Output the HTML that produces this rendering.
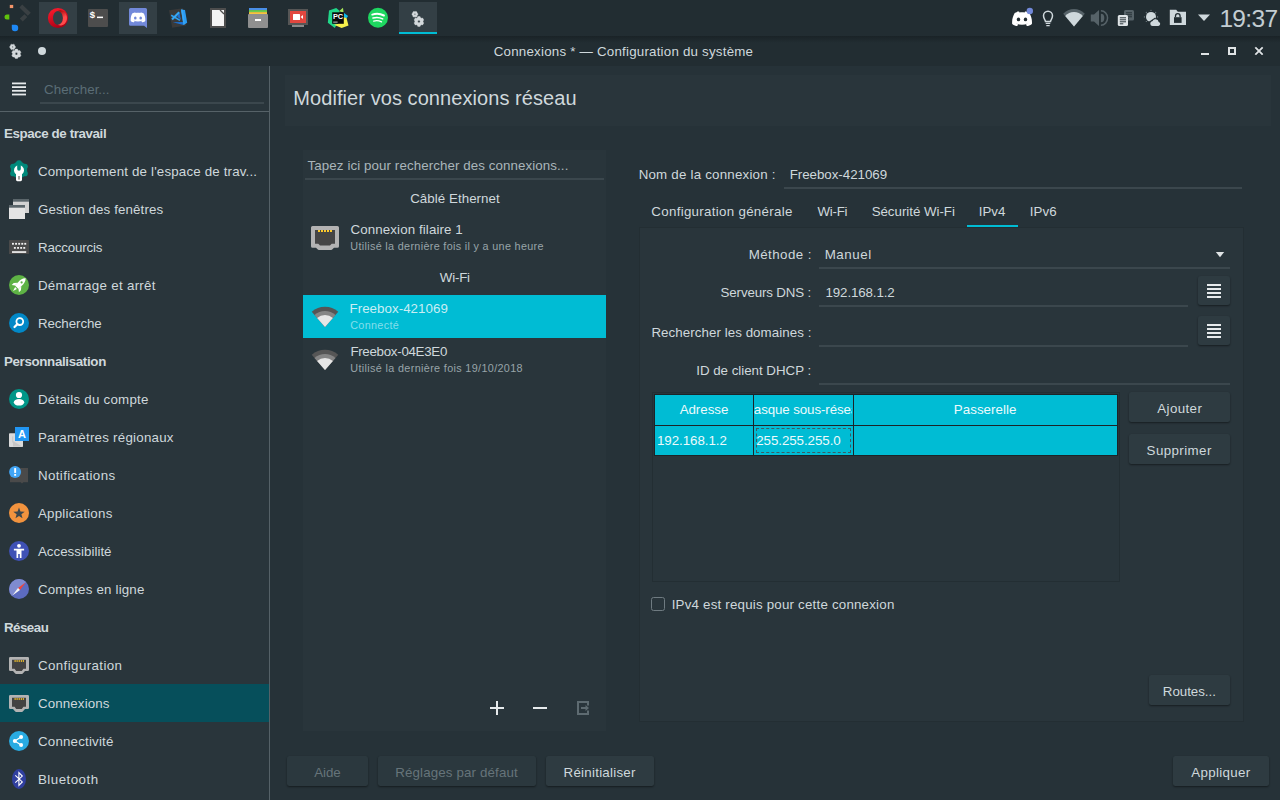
<!DOCTYPE html>
<html lang="fr">
<head>
<meta charset="utf-8">
<title>Connexions — Configuration du système</title>
<style>
*{box-sizing:border-box;margin:0;padding:0}
html,body{width:1280px;height:800px;overflow:hidden;background:#263238}
body{position:relative;font-family:"Liberation Sans",sans-serif;font-size:13.33px;color:#cfd8dc;letter-spacing:.17px}
.abs{position:absolute}
.t{position:absolute;white-space:nowrap;line-height:18px;height:18px;margin-top:0}
#panel{position:absolute;left:0;top:0;width:1280px;height:36px;background:#222d32}
#tbar{position:absolute;left:0;top:36px;width:1280px;height:30px;background:#222d32}
#tshadow{position:absolute;left:0;top:36px;width:1280px;height:7px;background:linear-gradient(#1a2327,rgba(34,45,50,0))}
.slot{position:absolute;top:2px;width:38px;height:32px;background:#333f45}
#side{position:absolute;left:0;top:66px;width:269px;height:734px;background:#29353b}
#sidesep{position:absolute;left:269px;top:66px;width:1px;height:734px;background:#556167}
.cat{position:absolute;left:4px;font-weight:bold;font-size:13.33px;white-space:nowrap;line-height:18px;letter-spacing:-.42px;margin-top:0}
.it{position:absolute;left:38px;white-space:nowrap;line-height:18px;margin-top:0}
.ic{position:absolute;left:8px;width:22px;height:22px}
.btn{position:absolute;background:#2e3b41;border-radius:2.5px;box-shadow:0 1px 2px rgba(0,0,0,.45);height:30.4px}
.btn.dis{background:#2b383e}
.ul{position:absolute;height:2px;background:#3b474d}

</style>
</head>
<body>

<svg width="0" height="0" style="position:absolute">
<defs>
<g id="gears" fill="#d3d8db" stroke="#d3d8db" stroke-width=".5" stroke-linejoin="round"><path fill-rule="evenodd" d="M14.91 20.51L14.35 21.85L11.65 21.85L11.09 20.51L10.05 19.91L8.61 20.09L7.26 17.75L8.14 16.60L8.14 15.40L7.26 14.25L8.61 11.91L10.05 12.09L11.09 11.49L11.65 10.15L14.35 10.15L14.91 11.49L15.95 12.09L17.39 11.91L18.74 14.25L17.86 15.40L17.86 16.60L18.74 17.75L17.39 20.09L15.95 19.91zM14.50 16a1.5 1.5 0 1 0 -3.00 0a1.5 1.5 0 1 0 3.00 0z"/><path fill-rule="evenodd" d="M10.96 6.16L11.73 6.56L11.73 8.30L10.96 8.70L10.70 9.15L10.74 10.02L9.23 10.89L8.50 10.42L7.98 10.42L7.25 10.89L5.74 10.02L5.78 9.15L5.52 8.70L4.75 8.30L4.75 6.56L5.52 6.16L5.78 5.71L5.74 4.84L7.25 3.97L7.98 4.44L8.50 4.44L9.23 3.97L10.74 4.84L10.70 5.71zM9.04 7.43a0.8 0.8 0 1 0 -1.60 0a0.8 0.8 0 1 0 1.60 0z"/></g>
</defs>
</svg>
<!-- top panel -->
<div id="panel"></div>
<div id="tbar"></div>
<div id="tshadow"></div>
<div class="slot" style="left:39px"></div>
<div class="slot" style="left:119px"></div>
<div class="slot" style="left:399px"></div>
<div class="abs" style="left:399px;top:32px;width:38px;height:2px;background:#00bcd4"></div>

<!-- launcher -->
<svg class="abs" style="left:0;top:0" width="36" height="36" viewBox="0 0 36 36">
<rect x="9.8" y="4.9" width="3.4" height="3.2" fill="#f4956a"/>
<path d="M7 14.5h2.3v5H7a2.5 2.5 0 0 1 0-5z" fill="#5fc20d"/>
<path d="M11.8 24.8h3.4a3 3 0 0 1 3 3v.4a3 3 0 0 1-3 3h-.4a3 3 0 0 1-3-3z" fill="#1e88f5"/>
<path d="M22.2 4.6l8.6 8.1-3 3.1-8.4-8.2zM24.5 14.3l2.8 2.8-4.6 4.4-2.9-2.9z" fill="#3a4043"/>
</svg>
<!-- opera -->
<svg class="abs" style="left:46px;top:6px" width="24" height="24" viewBox="0 0 24 24">
<defs><linearGradient id="og" x1="0.2" y1="0" x2="0.6" y2="1"><stop offset="0" stop-color="#ff1b2d"/><stop offset="1" stop-color="#a70014"/></linearGradient>
<linearGradient id="og2" x1="0" y1="0" x2="0.3" y2="1"><stop offset="0" stop-color="#9c0000"/><stop offset="0.6" stop-color="#ff4b4b"/></linearGradient></defs>
<path fill-rule="evenodd" fill="url(#og)" d="M12 1.900a10.100 10.100 0 1 0 0 20.200 10.100 10.100 0 1 0 0-20.200zM12 5c2.750 0 4.950 3.100 4.950 6.900s-2.200 6.900-4.950 6.900-4.950-3.100-4.950-6.900 2.200-6.900 4.950-6.900z"/>
<path fill="url(#og2)" d="M12 5C14.600 2.900 21 5.500 21 12s-6.400 9-9 6.800A4.950 6.900 0 0 0 12 5z"/>
</svg>
<!-- terminal -->
<svg class="abs" style="left:86px;top:6px" width="24" height="24" viewBox="0 0 24 24">
<rect x="2" y="3" width="20" height="18" rx="1" fill="#4d4d4d"/>
<text x="3.600" y="12" font-family="Liberation Mono,monospace" font-weight="bold" font-size="9.500" fill="#fff">$</text>
<rect x="11" y="10.600" width="6" height="1.500" fill="#fff"/>
</svg>
<!-- discord -->
<svg class="abs" style="left:126px;top:6px" width="24" height="24" viewBox="0 0 24 24">
<path d="M4.500 2h15a1.500 1.500 0 0 1 1.500 1.500V22l-3-2.200H4.500A1.500 1.500 0 0 1 3 18.300V3.500A1.500 1.500 0 0 1 4.500 2z" fill="#7289da"/>
<path transform="translate(0 -.8)" d="M6.200 8.400c1.300-.9 2.600-1.100 3.200-1.100l.3.500c1.500-.2 3.100-.2 4.600 0l.3-.5c.6 0 1.900.2 3.200 1.100 1 2 1.800 4.300 1.500 7.300-1.200 1-2.400 1.300-3.300 1.300l-.7-1c.5-.2.900-.4 1.300-.7-2.700 1.300-6.500 1.300-9.200 0 .4.300.8.500 1.300.7l-.7 1c-.9 0-2.100-.3-3.300-1.300-.3-3 .5-5.300 1.500-7.300z" fill="#fff"/>
<ellipse cx="9.300" cy="11.900" rx="1.300" ry="1.500" fill="#7289da"/><ellipse cx="14.700" cy="11.900" rx="1.300" ry="1.500" fill="#7289da"/>
</svg>
<!-- vscode -->
<svg class="abs" style="left:166px;top:6px" width="24" height="24" viewBox="0 0 24 24">
<path d="M3 4.200L17 2.200l3.200 17.400-14 2.200z" fill="#3a3a3a"/>
<path d="M13.200 6.200l1.800 7.600-3.800-3z" fill="#1e6fd0"/>
<path d="M5.200 9.200l8.800 5.200" stroke="#2fa3f4" stroke-width="1.600"/>
<path d="M6 13.600l7.200-7.400" stroke="#35a7f5" stroke-width="2.100"/>
<path d="M6.800 16.300L17 16l.6 3z" fill="#1a73d8"/>
<path d="M15 3.400l4 .6 2.200 12.800-3.600 2.200-.6-3z" fill="#2a9bf3"/>
<path d="M15 3.400l1.800.3 2 14.200-1.200 1.100-.6-3z" fill="#3aa8f6"/>
</svg>
<!-- document -->
<svg class="abs" style="left:206px;top:6px" width="24" height="24" viewBox="0 0 24 24">
<path d="M4 2h16v20H4z" fill="#4d4d4d"/>
<path d="M6 4h8.500L18 7.500V20H6z" fill="#f4f4f4"/>
<path d="M14.500 4L18 7.500V4z" fill="#f4f4f4" opacity=".0"/>
<path d="M14 4h4v4z" fill="#f4f4f4"/>
<path d="M14 4l4 4" stroke="#4d4d4d" stroke-width="1.300"/>
</svg>
<!-- archive -->
<svg class="abs" style="left:246px;top:6px" width="24" height="24" viewBox="0 0 24 24">
<rect x="3" y="2" width="18" height="2.200" fill="#4a8fe7"/>
<rect x="3" y="4.100" width="18" height="2.100" fill="#6ccb4f"/>
<rect x="3" y="6.100" width="18" height="2.200" fill="#f7c540"/>
<rect x="2" y="8" width="20" height="14" rx="1" fill="#8f8f8f"/>
<rect x="9" y="13" width="6" height="2" fill="#fff"/>
</svg>
<!-- recorder -->
<svg class="abs" style="left:286px;top:6px" width="24" height="24" viewBox="0 0 24 24">
<rect x="2" y="3" width="20" height="16" fill="#565656"/>
<rect x="4" y="5" width="16" height="12" fill="#e2473f"/>
<rect x="6" y="19" width="12" height="2" fill="#8a8a8a"/>
<rect x="7" y="8" width="7" height="6" rx=".5" fill="#fff"/>
<path d="M14.600 11l2.400-2v4z" fill="#fff"/>
</svg>
<!-- pycharm -->
<svg class="abs" style="left:326px;top:6px" width="24" height="24" viewBox="0 0 24 24">
<path d="M3 4.600l7.200-2.600 3 2.600 1 8L8.800 22 1.800 16.800z" fill="#21d789"/>
<path d="M13 5.200l4-3.400.6 4.800z" fill="#a6e55a"/>
<path d="M17.800 6.800l4.300 3.200-1.600 2.200-2.700-.8z" fill="#0fb9ea"/>
<path d="M17.800 11.200l2.700.9 2 7.500-6.900 2.400-7.600-3.200 4-1z" fill="#f7f04b"/>
<rect x="6.200" y="6.300" width="11.600" height="11.500" fill="#0a0a0a"/>
<text x="7" y="12.600" font-family="Liberation Sans,sans-serif" font-weight="bold" font-size="7.400" fill="#fff" letter-spacing="-.3">PC</text>
<rect x="7.200" y="15.600" width="4.400" height="1" fill="#c8c8c8"/>
</svg>
<!-- spotify -->
<svg class="abs" style="left:366px;top:6px" width="24" height="24" viewBox="0 0 24 24">
<circle cx="12" cy="11.800" r="10" fill="#1ed760"/>
<path d="M6.300 8.600c4-1.200 8.200-.8 11.600.9" stroke="#fff" stroke-width="2" fill="none" stroke-linecap="round"/>
<path d="M7 12c3.300-.9 6.800-.6 9.700.9" stroke="#fff" stroke-width="1.600" fill="none" stroke-linecap="round"/>
<path d="M7.700 15.100c2.700-.7 5.400-.4 7.800.8" stroke="#fff" stroke-width="1.300" fill="none" stroke-linecap="round"/>
</svg>
<!-- settings (task) -->
<svg class="abs" style="left:408.1px;top:7.5px" width="20.2" height="20.2" viewBox="0 0 24 24"><use href="#gears"/></svg>

<!-- tray: discord -->
<svg class="abs" style="left:1010px;top:6px" width="24" height="24" viewBox="0 0 24 24">
<path d="M4.700 6.900c1.700-1.100 3.500-1.300 4.400-1.300l.4.800c1.700-.3 3.400-.3 5.100 0l.4-.8c.9 0 2.700.2 4.400 1.300 1.600 2.900 3 6.600 2.500 11.100-1.800 1.500-3.600 2-5 2.100l-1-1.600c.7-.2 1.300-.6 1.900-1-3.700 1.700-7.800 1.700-11.500 0 .6.400 1.200.8 1.900 1l-1 1.600c-1.400-.1-3.200-.6-5-2.100-.5-4.500.9-8.200 2.500-11.100z" fill="#fff"/>
<ellipse cx="8.500" cy="13.400" rx="1.700" ry="1.900" fill="#222d32"/><ellipse cx="15.500" cy="13.400" rx="1.700" ry="1.900" fill="#222d32"/>
<circle cx="19.800" cy="5" r="3.200" fill="#7289da"/>
</svg>
<!-- tray: bulb -->
<svg class="abs" style="left:1036px;top:6px" width="24" height="24" viewBox="0 0 24 24" fill="none" stroke="#cfd8dc">
<path d="M9.500 15.600c0-1.700-2-2.800-2-5.800a4.500 4.500 0 0 1 9 0c0 3-2 4.100-2 5.800z" stroke-width="1.500"/>
<path d="M9.700 17.400h4.600M10.300 19.600h3.400" stroke-width="1.200"/>
</svg>
<!-- tray: wifi -->
<svg class="abs" style="left:1062px;top:6px" width="24" height="24" viewBox="0 0 24 24">
<path d="M12 20.400L1.200 7.800A14.500 14.500 0 0 1 22.800 7.800z" fill="#566268"/>
<path d="M12 20.400L3.200 10A11.800 11.800 0 0 1 20.800 10z" fill="#cfd8dc"/>
</svg>
<!-- tray: volume -->
<svg class="abs" style="left:1087px;top:6px" width="24" height="24" viewBox="0 0 24 24" fill="#566268">
<path d="M3.800 8.600h3.200l5-4.700v16.200l-5-4.700H3.800z"/>
<path d="M13.900 7.800a3.400 4.200 0 0 1 0 8.400z"/>
<path d="M13.900 3.900a7.400 8.100 0 0 1 0 16.200v-1.600a5.900 6.500 0 0 0 0-13z"/>
</svg>
<!-- tray: clipboard -->
<svg class="abs" style="left:1114px;top:6px" width="24" height="24" viewBox="0 0 24 24">
<rect x="10" y="4" width="10" height="10.600" rx="1.500" fill="#566268"/>
<path d="M12 6.800h6M12 8.800h6M12 10.800h6M12 12.800h3" stroke="#222d32" stroke-width=".9"/>
<rect x="3.800" y="9" width="10.200" height="11" rx="1.500" fill="#dfe4e7"/>
<path d="M5.800 11.800h6.200M5.800 13.800h6.200M5.800 15.800h6.200M5.800 17.800h3.500" stroke="#222d32" stroke-width=".95"/>
</svg>
<!-- tray: weather -->
<svg class="abs" style="left:1140px;top:6px" width="24" height="24" viewBox="0 0 24 24">
<circle cx="11" cy="10.900" r="5" fill="#cfd8dc"/>
<g fill="#7d898e"><circle cx="11" cy="4.300" r=".6"/><circle cx="6.300" cy="6.300" r=".6"/><circle cx="15.700" cy="6.300" r=".6"/><circle cx="4.400" cy="10.900" r=".6"/><circle cx="17.600" cy="10.900" r=".6"/><circle cx="6.300" cy="15.500" r=".6"/></g>
<path d="M9.300 16.400l6.300-4.300" stroke="#222d32" stroke-width="1.600"/>
<path d="M12.800 20a2.400 2.400 0 0 1-.3-4.800 3.300 3.300 0 0 1 6.200.7 2.100 2.100 0 0 1-.3 4.100z" fill="#cfd8dc"/>
</svg>
<!-- tray: vault -->
<svg class="abs" style="left:1166px;top:6px" width="24" height="24" viewBox="0 0 24 24">
<path d="M3.800 3.800h6.400l1.600 2H20v13.300H3.800z" fill="#cfd8dc"/>
<rect x="8" y="11.200" width="7.600" height="5.700" fill="#222d32"/>
<path d="M9.500 11.300V9.900a2.300 2.300 0 0 1 4.600 0v1.400" stroke="#222d32" stroke-width="1.300" fill="none"/>
</svg>
<svg class="abs" style="left:1196px;top:12px" width="16" height="12" viewBox="0 0 16 12"><path d="M2 2.500h12L8 9z" fill="#cfd8dc"/></svg>

<!-- title bar -->
<div class="abs" style="left:38px;top:47px;width:8px;height:8px;border-radius:50%;background:#cfd8dc"></div>


<svg class="abs" style="left:5.5px;top:40.8px" width="19.2" height="19.2" viewBox="0 0 24 24"><use href="#gears"/></svg>
<svg class="abs" style="left:1196px;top:42px" width="72" height="18" viewBox="0 0 72 18" fill="#dfe3e5">
<rect x="5" y="11" width="8" height="2"/>
<path fill-rule="evenodd" d="M32 5h8v8h-8zM34 7v4h4V7z"/>
<path d="M59.900 5L63 8.100 66.100 5l.9.900L63.900 9l3.100 3.100-.9.900L63 9.900 59.900 13l-.9-.9L62.100 9 59 5.900z" stroke="#dfe3e5" stroke-width=".6"/>
</svg>
<!-- sidebar -->
<div id="side"></div>
<div id="sidesep"></div>
<div class="ul" style="left:40px;top:102px;width:224px"></div>
<div class="abs" style="left:0;top:111px;width:269px;height:1px;background:#566268"></div>

<div class="abs" style="left:0;top:684px;width:269px;height:38px;background:#064f5b"></div>


<!-- sidebar icons -->
<svg class="ic" style="top:160px" width="22" height="22" viewBox="0 0 22 22"><circle cx="11" cy="10" r="8.200" fill="#00897b"/><circle cx="11.00" cy="3.20" r="2.950" fill="#00897b"/><circle cx="16.89" cy="6.60" r="2.950" fill="#00897b"/><circle cx="16.89" cy="13.40" r="2.950" fill="#00897b"/><circle cx="11.00" cy="16.80" r="2.950" fill="#00897b"/><circle cx="5.11" cy="13.40" r="2.950" fill="#00897b"/><circle cx="5.11" cy="6.60" r="2.950" fill="#00897b"/><circle cx="11" cy="10.200" r="5" fill="#fff"/><path d="M9.200 3.500h3.600v5.400a1.800 1.800 0 0 1-3.600 0z" fill="#00897b"/><rect x="8" y="12.500" width="6" height="8.700" rx="1.400" fill="#fff"/><rect x="10.100" y="16" width="1.800" height="3.600" fill="#9a9a9a"/></svg>
<svg class="ic" style="top:198px" width="22" height="22" viewBox="0 0 22 22"><rect x="5" y="1" width="16" height="14" fill="#d2d2d2"/><rect x="5" y="1" width="16" height="2.700" fill="#5b666b"/>
<rect x="1" y="7" width="16" height="14" fill="#e4e4e4"/><rect x="1" y="7" width="16" height="2.700" fill="#5b666b"/></svg>
<svg class="ic" style="top:236px" width="22" height="22" viewBox="0 0 22 22"><rect x="1" y="4" width="20" height="14" rx=".6" fill="#4a4a4a"/>
<g fill="#f2f2f2"><rect x="4" y="6.900" width="1.900" height="1.800"/><rect x="7.100" y="6.900" width="1.900" height="1.800"/><rect x="10.200" y="6.900" width="1.900" height="1.800"/><rect x="13.300" y="6.900" width="1.900" height="1.800"/><rect x="16.300" y="6.900" width="1.900" height="1.800"/>
<rect x="5.900" y="11" width="1.900" height="1.800"/><rect x="9.100" y="11" width="1.900" height="1.800"/><rect x="12.200" y="11" width="1.900" height="1.800"/><rect x="15.300" y="11" width="1.900" height="1.800"/>
<rect x="4" y="15.200" width="14.200" height="1.700"/></g></svg>
<svg class="ic" style="top:274px" width="22" height="22" viewBox="0 0 22 22"><circle cx="11" cy="11" r="10" fill="#5eb345"/><g transform="rotate(45 11 11)" fill="#fff"><path d="M11 1.600C13.400 3.800 13.800 7 13.500 10v4.200H8.500V10C8.200 7 8.600 3.800 11 1.600z"/><path d="M8.500 10.200L5.900 13.400v2.800l2.600-2zM13.500 10.200l2.600 3.200v2.800l-2.600-2z"/><path d="M9.700 15.200h2.600L11 19.400z"/><circle cx="11" cy="7.300" r="1.100" fill="#5eb345"/></g></svg>
<svg class="ic" style="top:312px" width="22" height="22" viewBox="0 0 22 22"><circle cx="11" cy="11" r="10" fill="#0288c7"/>
<circle cx="11.800" cy="9.600" r="3.400" fill="none" stroke="#fff" stroke-width="1.800"/>
<path d="M9.400 12.100l-2.900 2.900" stroke="#fff" stroke-width="2.200" stroke-linecap="round"/></svg>
<svg class="ic" style="top:388px" width="22" height="22" viewBox="0 0 22 22"><circle cx="11" cy="11" r="10" fill="#009688"/>
<circle cx="11" cy="7" r="3.100" fill="#fff"/><ellipse cx="11" cy="14.300" rx="5.200" ry="3.300" fill="#fff"/></svg>
<svg class="ic" style="top:426px" width="22" height="22" viewBox="0 0 22 22"><rect x="1" y="7.200" width="14" height="13.800" rx=".8" fill="#dadada"/>
<path d="M4.200 10.400h1v6.200h-1zM5 15l9 5.600H5z" fill="#bdbdbd" opacity=".7"/>
<rect x="7" y="1" width="14" height="14" fill="#2196f3"/>
<text x="14" y="12.200" text-anchor="middle" font-family="Liberation Sans,sans-serif" font-weight="bold" font-size="11" fill="#fff">A</text></svg>
<svg class="ic" style="top:464px" width="22" height="22" viewBox="0 0 22 22"><path d="M2 4h18v14.200h-4.700l-1.300 1.400-1.300-1.400H2z" fill="#4a4a4a"/>
<circle cx="7.100" cy="8" r="6" fill="#42a5f5"/>
<rect x="6.200" y="4.100" width="1.900" height="4.800" fill="#fff"/><rect x="6.200" y="10" width="1.900" height="1.800" fill="#fff"/></svg>
<svg class="ic" style="top:502px" width="22" height="22" viewBox="0 0 22 22"><circle cx="11" cy="11" r="10" fill="#f2933e"/>
<polygon points="11.00,5.50 12.47,9.48 16.71,9.65 13.38,12.27 14.53,16.35 11.00,14.00 7.47,16.35 8.62,12.27 5.29,9.65 9.53,9.48" fill="#3c474d"/></svg>
<svg class="ic" style="top:540px" width="22" height="22" viewBox="0 0 22 22"><circle cx="11" cy="11" r="10" fill="#3f51b5"/>
<circle cx="11" cy="5.800" r="1.900" fill="#fff"/>
<path d="M5.900 8.800h10.200v1.700H13.500V18h-1.700v-4h-1.600v4H8.500v-7.500H5.900z" fill="#fff"/></svg>
<svg class="ic" style="top:578px" width="22" height="22" viewBox="0 0 22 22"><circle cx="11" cy="11" r="10" fill="#5c6bc0"/>
<path d="M3.930 18.070A10 10 0 0 1 18.070 3.930z" fill="#7f8bd0"/>
<path d="M17.600 4.400L12 12l-2-2z" fill="#f44336"/>
<path d="M4.400 17.600L12 12l-2-2z" fill="#f5f5f5"/></svg>
<svg class="ic" style="top:654px" width="22" height="22" viewBox="0 0 22 22"><path d="M2.200 3h17.600a1.200 1.200 0 0 1 1.200 1.200v11.600a1.200 1.200 0 0 1-1.200 1.200H17l-2.200 2.600a1 1 0 0 1-.8.400H8a1 1 0 0 1-.8-.4L5 17H2.200A1.200 1.200 0 0 1 1 15.800V4.200A1.200 1.200 0 0 1 2.200 3z" fill="#b3b3b3"/>
<path d="M4 5.800h14v9h-2.600L13.800 17H8.200L6.600 14.800H4z" fill="#424242"/>
<path d="M7.100 6h1v2h-1zM9.100 6h1v2h-1zM11.200 6h1v2h-1zM13.300 6h1v2h-1zM15.300 6h1v2h-1z" fill="#fdc92b" transform="translate(-.5 0)"/></svg>
<svg class="ic" style="top:692px" width="22" height="22" viewBox="0 0 22 22"><path d="M2.200 3h17.600a1.200 1.200 0 0 1 1.200 1.200v11.600a1.200 1.200 0 0 1-1.200 1.200H17l-2.200 2.600a1 1 0 0 1-.8.400H8a1 1 0 0 1-.8-.4L5 17H2.200A1.200 1.200 0 0 1 1 15.800V4.200A1.200 1.200 0 0 1 2.200 3z" fill="#b3b3b3"/>
<path d="M4 5.800h14v9h-2.600L13.800 17H8.200L6.600 14.800H4z" fill="#424242"/>
<path d="M7.100 6h1v2h-1zM9.100 6h1v2h-1zM11.200 6h1v2h-1zM13.300 6h1v2h-1zM15.300 6h1v2h-1z" fill="#fdc92b" transform="translate(-.5 0)"/></svg>
<svg class="ic" style="top:730px" width="22" height="22" viewBox="0 0 22 22"><circle cx="11" cy="11" r="10" fill="#29abe2"/>
<path d="M13.100 7.100L6.800 11l6.300 4" stroke="#fff" stroke-width="1.200" fill="none"/>
<circle cx="13.100" cy="7.100" r="2" fill="#fff"/><circle cx="6.800" cy="11" r="2" fill="#fff"/><circle cx="13.100" cy="15" r="2" fill="#fff"/></svg>
<svg class="ic" style="top:768px" width="22" height="22" viewBox="0 0 22 22"><ellipse cx="11" cy="11" rx="7" ry="10" fill="#303f9f"/>
<path d="M7.300 7.300l7 6.600-3.400 3.400V4.700l3.400 3.400-7 6.600" stroke="#fff" stroke-width="1.100" fill="none" stroke-linejoin="miter"/></svg>
<svg class="abs" style="left:10px;top:80px" width="18" height="18" viewBox="0 0 18 18" fill="#e6eaec"><rect x="2" y="2.500" width="14" height="1.800"/><rect x="2" y="6.200" width="14" height="1.800"/><rect x="2" y="9.900" width="14" height="1.800"/><rect x="2" y="13.600" width="14" height="1.800"/></svg>
<!-- main header -->
<div class="abs" style="left:285px;top:75px;width:986px;height:51px;background:#29353b"></div>

<!-- connection list -->
<div class="abs" style="left:303px;top:150px;width:303px;height:581px;background:#29353b"></div>
<div class="ul" style="left:305px;top:178px;width:299px"></div>
<div class="abs" style="left:303px;top:295px;width:303px;height:43px;background:#00bcd4"></div>

<!-- editor -->
<div class="ul" style="left:784px;top:187px;width:458px"></div>
<div class="abs" style="left:967px;top:225px;width:51px;height:2px;background:#00bcd4"></div>
<div class="abs" style="left:639px;top:227px;width:605px;height:495px;background:#29353b;border:1px solid #232e33"></div>

<div class="ul" style="left:819px;top:267px;width:411px"></div>
<div class="ul" style="left:819px;top:305px;width:369px"></div>
<div class="ul" style="left:819px;top:345px;width:369px"></div>
<div class="ul" style="left:819px;top:383px;width:411px"></div>
<div class="btn" style="left:1198px;top:276px;width:32px;height:28.6px"></div>
<div class="btn" style="left:1198px;top:316px;width:32px;height:28.6px"></div>

<!-- table -->
<div class="abs" style="left:652px;top:392px;width:468px;height:190px;border:1px solid #232e33;background:#29353b"></div>
<div class="abs" style="left:654px;top:394px;width:464px;height:62px;background:#1c2428"></div>
<div class="abs" style="left:655px;top:395px;width:98px;height:30px;background:#00bcd4"></div>
<div class="abs" style="left:754px;top:395px;width:99px;height:30px;background:#00bcd4"></div>
<div class="abs" style="left:854px;top:395px;width:263px;height:30px;background:#00bcd4"></div>
<div class="abs" style="left:655px;top:426px;width:98px;height:29px;background:#00bcd4"></div>
<div class="abs" style="left:754px;top:426px;width:99px;height:29px;background:#00bcd4"></div>
<div class="abs" style="left:854px;top:426px;width:263px;height:29px;background:#00bcd4"></div>
<div class="abs" style="left:756px;top:428px;width:95px;height:25px;border:1px dashed #3d5c63"></div>

<div class="btn" style="left:1129px;top:392px;width:101px"></div>
<div class="btn" style="left:1129px;top:434px;width:101px"></div>
<div class="abs" style="left:651px;top:597px;width:14px;height:14px;border:1.5px solid #6f7b81;border-radius:2.5px"></div>
<div class="btn" style="left:1149px;top:675px;width:81px"></div>


<!-- list icons -->
<svg class="abs" style="left:311px;top:226px" width="28" height="24" viewBox="0 0 28 24">
<path d="M1.600 0h24.800a1.600 1.600 0 0 1 1.600 1.600v18.600a1.600 1.600 0 0 1-1.600 1.600H23l-1.800 1.800a1.400 1.400 0 0 1-1 .4H7.800a1.400 1.400 0 0 1-1-.4L5 21.800H1.600A1.600 1.600 0 0 1 0 20.200V1.600A1.600 1.600 0 0 1 1.600 0z" fill="#b3b3b3"/>
<path d="M4 4h20v13.800h-3.300L19 19.600H9l-1.700-1.800H4z" fill="#454545"/>
<path d="M7 4h2v2H7zM10 4h2v2h-2zM13 4h2v2h-2zM16 4h2v2h-2zM19 4h2v2h-2z" fill="#fdc92b"/>
</svg>
<svg class="abs" style="left:311px;top:305px" width="28" height="24" viewBox="0 0 28 24"><path d="M14 22.0L0.75 6.75A20.2 20.2 0 0 1 27.25 6.75z" fill="#565656"/><path d="M14 22.0L3.50 9.92A16 16 0 0 1 24.50 9.92z" fill="#858585"/><path d="M14 22.0L6.13 12.94A12 12 0 0 1 21.87 12.94z" fill="#e6e6e6"/></svg>
<svg class="abs" style="left:311px;top:348px" width="28" height="24" viewBox="0 0 28 24"><path d="M14 22.0L0.75 6.75A20.2 20.2 0 0 1 27.25 6.75z" fill="#565656"/><path d="M14 22.0L3.50 9.92A16 16 0 0 1 24.50 9.92z" fill="#858585"/><path d="M14 22.0L6.13 12.94A12 12 0 0 1 21.87 12.94z" fill="#e6e6e6"/></svg>
<svg class="abs" style="left:488px;top:699px" width="18" height="18" viewBox="0 0 18 18" fill="#e6eaec"><rect x="2" y="8" width="14" height="2"/><rect x="8" y="2" width="2" height="14"/></svg>
<svg class="abs" style="left:531px;top:699px" width="18" height="18" viewBox="0 0 18 18" fill="#e6eaec"><rect x="2" y="8" width="14" height="2"/></svg>
<svg class="abs" style="left:574px;top:699px" width="18" height="18" viewBox="0 0 18 18" fill="#5e6b71"><path d="M3 2h12v4.500h-2V4H5v10h8v-2.500h2V16H3z"/><path d="M7 8h4.500V6l3.500 3-3.500 3v-2H7z"/></svg>
<!-- combo arrow + list btn icons -->
<svg class="abs" style="left:1215px;top:251px" width="10" height="7" viewBox="0 0 10 7"><path d="M.8 1h8.400L5 6.200z" fill="#dfe3e5"/></svg>
<svg class="abs" style="left:1205px;top:282px" width="18" height="18" viewBox="0 0 18 18" fill="#e6eaec"><rect x="2" y="2" width="14" height="2"/><rect x="2" y="6" width="14" height="2"/><rect x="2" y="10" width="14" height="2"/><rect x="2" y="14" width="14" height="2"/></svg>
<svg class="abs" style="left:1205px;top:322px" width="18" height="18" viewBox="0 0 18 18" fill="#e6eaec"><rect x="2" y="2" width="14" height="2"/><rect x="2" y="6" width="14" height="2"/><rect x="2" y="10" width="14" height="2"/><rect x="2" y="14" width="14" height="2"/></svg>
<!-- bottom buttons -->
<div class="btn dis" style="left:287px;top:756px;width:81px"></div>
<div class="btn dis" style="left:378px;top:756px;width:158px"></div>
<div class="btn" style="left:546px;top:756px;width:108px"></div>
<div class="btn" style="left:1173px;top:756px;width:96px"></div>
<div class="t" id="clock" style="left:1219.39px;top:5px;letter-spacing:-0.644px;font-size:24.5px;line-height:28px;height:28px;color:#c3cdd2">19:37</div>
<div class="t" id="title" style="left:493.79px;top:43px;letter-spacing:0.213px">Connexions * — Configuration du système</div>
<div class="t" id="srch" style="left:44.12px;top:81px;letter-spacing:0.021px;color:#5b6d76">Chercher...</div>
<div class="t" id="c1" style="left:3.96px;top:125px;letter-spacing:-0.392px;font-weight:bold">Espace de travail</div>
<div class="t" id="i1" style="left:37.97px;top:163px;letter-spacing:0.166px">Comportement de l'espace de trav...</div>
<div class="t" id="i2" style="left:37.97px;top:201px;letter-spacing:0.116px">Gestion des fenêtres</div>
<div class="t" id="i3" style="left:37.93px;top:239px;letter-spacing:-0.146px">Raccourcis</div>
<div class="t" id="i4" style="left:37.93px;top:277px;letter-spacing:0.294px">Démarrage et arrêt</div>
<div class="t" id="i5" style="left:37.93px;top:315px;letter-spacing:-0.085px">Recherche</div>
<div class="t" id="c2" style="left:3.96px;top:353px;letter-spacing:-0.338px;font-weight:bold">Personnalisation</div>
<div class="t" id="i6" style="left:37.93px;top:391px;letter-spacing:0.238px">Détails du compte</div>
<div class="t" id="i7" style="left:37.93px;top:429px;letter-spacing:0.234px">Paramètres régionaux</div>
<div class="t" id="i8" style="left:37.93px;top:467px;letter-spacing:0.382px">Notifications</div>
<div class="t" id="i9" style="left:37.88px;top:505px;letter-spacing:0.235px">Applications</div>
<div class="t" id="i10" style="left:37.88px;top:543px;letter-spacing:0.026px">Accessibilité</div>
<div class="t" id="i11" style="left:37.97px;top:581px;letter-spacing:0.179px">Comptes en ligne</div>
<div class="t" id="c3" style="left:3.96px;top:619px;letter-spacing:-0.515px;font-weight:bold">Réseau</div>
<div class="t" id="i12" style="left:37.97px;top:657px;letter-spacing:0.397px">Configuration</div>
<div class="t" id="i13" style="left:37.91px;top:695px;letter-spacing:0.133px">Connexions</div>
<div class="t" id="i14" style="left:37.97px;top:733px;letter-spacing:0.191px">Connectivité</div>
<div class="t" id="i15" style="left:37.93px;top:771px;letter-spacing:0.480px">Bluetooth</div>
<div class="t" id="hdr" style="left:293.31px;top:84px;letter-spacing:0.071px;font-size:20px;line-height:28px;height:28px">Modifier vos connexions réseau</div>
<div class="t" id="l0" style="left:307.62px;top:157px;letter-spacing:0.087px;color:#aab5ba">Tapez ici pour rechercher des connexions...</div>
<div class="t" id="l1" style="left:410.21px;top:190px;letter-spacing:0.044px">Câblé Ethernet</div>
<div class="t" id="l2" style="left:350.51px;top:221px;letter-spacing:0.104px">Connexion filaire 1</div>
<div class="t" id="l3" style="left:350.33px;top:238px;letter-spacing:0.329px;font-size:10.8px;line-height:16px;height:16px;color:#98a4a9">Utilisé la dernière fois il y a une heure</div>
<div class="t" id="l4" style="left:439.86px;top:269px;letter-spacing:-0.227px">Wi-Fi</div>
<div class="t" id="l5" style="left:349.49px;top:300px;letter-spacing:0.041px;color:#c9eef4">Freebox-421069</div>
<div class="t" id="l6" style="left:350.23px;top:317px;letter-spacing:0.336px;font-size:10.8px;line-height:16px;height:16px;color:#84deeb">Connecté</div>
<div class="t" id="l7" style="left:350.38px;top:343px;letter-spacing:-0.291px">Freebox-04E3E0</div>
<div class="t" id="l8" style="left:350.33px;top:360px;letter-spacing:0.353px;font-size:10.8px;line-height:16px;height:16px;color:#98a4a9">Utilisé la dernière fois 19/10/2018</div>
<div class="t" id="e0" style="left:638.64px;top:166px;letter-spacing:0.212px">Nom de la connexion :</div>
<div class="t" id="e1" style="left:789.65px;top:166px;letter-spacing:-0.023px">Freebox-421069</div>
<div class="t" id="t0" style="left:651.33px;top:203px;letter-spacing:0.295px">Configuration générale</div>
<div class="t" id="t1" style="left:817.59px;top:203px;letter-spacing:-0.302px">Wi-Fi</div>
<div class="t" id="t2" style="left:871.64px;top:203px;letter-spacing:-0.028px">Sécurité Wi-Fi</div>
<div class="t" id="t3" style="left:978.69px;top:203px;letter-spacing:-0.007px">IPv4</div>
<div class="t" id="t4" style="left:1029.77px;top:203px;letter-spacing:0.115px">IPv6</div>
<div class="t" id="f0" style="left:748.69px;top:246px;letter-spacing:0.431px">Méthode :</div>
<div class="t" id="f1" style="left:824.69px;top:246px;letter-spacing:0.544px">Manuel</div>
<div class="t" id="f2" style="left:720.61px;top:284px;letter-spacing:-0.144px">Serveurs DNS :</div>
<div class="t" id="f3" style="left:825.52px;top:284px;letter-spacing:-0.124px">192.168.1.2</div>
<div class="t" id="f4" style="left:651.38px;top:324px;letter-spacing:0.062px">Rechercher les domaines :</div>
<div class="t" id="f5" style="left:696.23px;top:362px;letter-spacing:-0.020px">ID de client DHCP :</div>
<div class="t" id="h0" style="left:679.67px;top:401px;letter-spacing:-0.043px;color:#ecfafc">Adresse</div>
<div class="t" id="h2" style="left:953.87px;top:401px;letter-spacing:0.027px;color:#ecfafc">Passerelle</div>
<div class="t" id="r0" style="left:657.00px;top:432px;letter-spacing:-0.057px;color:#ecfafc">192.168.1.2</div>
<div class="t" id="r1" style="left:756.20px;top:432px;letter-spacing:-0.057px;color:#ecfafc">255.255.255.0</div>
<div class="t" id="b0" style="left:1157.36px;top:400px;letter-spacing:0.375px">Ajouter</div>
<div class="t" id="b1" style="left:1146.58px;top:442px;letter-spacing:0.412px">Supprimer</div>
<div class="t" id="cb" style="left:671.67px;top:596px;letter-spacing:0.201px">IPv4 est requis pour cette connexion</div>
<div class="t" id="b2" style="left:1162.80px;top:683px;letter-spacing:-0.029px">Routes...</div>
<div class="t" id="b3" style="left:314.18px;top:764px;letter-spacing:-0.028px;color:#66747a">Aide</div>
<div class="t" id="b4" style="left:395.21px;top:764px;letter-spacing:0.138px;color:#66747a">Réglages par défaut</div>
<div class="t" id="b5" style="left:563.60px;top:764px;letter-spacing:0.243px">Réinitialiser</div>
<div class="t" id="b6" style="left:1191.26px;top:764px;letter-spacing:0.332px">Appliquer</div>
<div class="abs" style="left:754px;top:395px;width:98px;height:30px;overflow:hidden"><div class="t" id="h1" style="left:-11.20px;top:6px;letter-spacing:-0.100px;color:#ecfafc">Masque sous-réseau</div></div>
</body>
</html>
